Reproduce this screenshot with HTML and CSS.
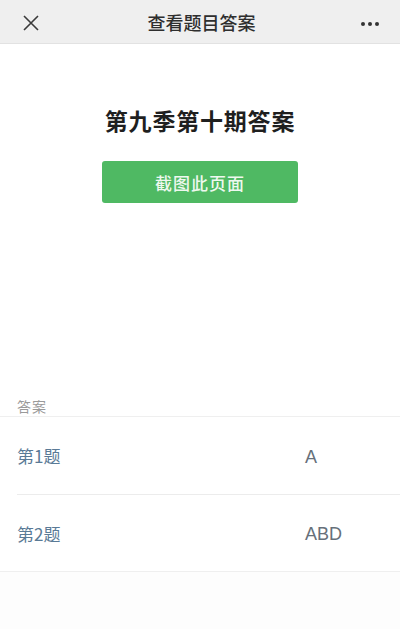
FILE: index.html
```html
<!DOCTYPE html>
<html lang="zh">
<head>
<meta charset="utf-8">
<title>查看题目答案</title>
<link rel="stylesheet" href="styles.css">
</head>
<body>
<div class="page">
  <header class="navbar">
    <span class="nav-btn close">
      <svg width="16" height="16" viewBox="0 0 16 16"><path d="M1 1L15 15M15 1L1 15" stroke="#3a3a3a" stroke-width="1.6" fill="none"/></svg>
    </span>
    <h1 class="nav-title">查看题目答案</h1>
    <span class="nav-btn more">
      <svg width="20" height="6" viewBox="0 0 20 6"><circle cx="3" cy="3" r="2" fill="#333"/><circle cx="10" cy="3" r="2" fill="#333"/><circle cx="17" cy="3" r="2" fill="#333"/></svg>
    </span>
  </header>

  <main class="content">
    <section class="hero">
      <h2 class="hero-title">第九季第十期答案</h2>
      <button class="btn-primary">截图此页面</button>
    </section>

    <section class="answers">
      <div class="answers-label">答案</div>
      <ul class="answer-list">
        <li class="answer-row"><span class="q">第1题</span><span class="a">A</span></li>
        <li class="answer-row"><span class="q">第2题</span><span class="a">ABD</span></li>
      </ul>
    </section>
  </main>
</div>
</body>
</html>
```

FILE: styles.css
```css
* { box-sizing: border-box; margin: 0; padding: 0; }

html, body {
  height: 100%;
}

body {
  font-family: "Noto Sans CJK SC", "Noto Sans", sans-serif;
  background: #fdfdfd;
  color: #333;
}

.page {
  min-height: 100%;
  display: flex;
  flex-direction: column;
}

.navbar {
  height: 44px;
  background: #efefef;
  border-bottom: 1px solid #e2e2e2;
  display: flex;
  align-items: center;
  justify-content: space-between;
  padding: 0 20px 0 23px;
}

.nav-btn {
  width: 20px;
  display: flex;
  align-items: center;
}

.nav-btn.close { margin-top: 2px; }
.nav-btn.more { justify-content: flex-end; margin-top: 4px; }

.nav-title {
  font-size: 18px;
  font-weight: 500;
  color: #2e2e2e;
  line-height: 24px;
}

.content {
  background: #fff;
}

.hero {
  display: flex;
  flex-direction: column;
  align-items: center;
  padding-top: 60px;
  height: 352px;
}

.hero-title {
  font-size: 23px;
  font-weight: 700;
  color: #1f1f1f;
  line-height: 32px;
  letter-spacing: 0.8px;
}

.btn-primary {
  margin-top: 25px;
  width: 196px;
  height: 42px;
  border: none;
  border-radius: 3px;
  background: #4fb963;
  color: #eef8ef;
  font-family: inherit;
  font-size: 17px;
  font-weight: 500;
  letter-spacing: 1px;
}

.answers-label {
  font-size: 14px;
  color: #9a9a9a;
  padding: 0 17px;
  line-height: 20px;
  height: 21px;
  border-bottom: 1px solid #efefef;
  letter-spacing: 1px;
}

.answer-list {
  list-style: none;
  border-bottom: 1px solid #efefef;
}

.answer-row {
  display: flex;
  align-items: center;
  height: 77px;
  margin-left: 17px;
  font-size: 17px;
}

.answer-row + .answer-row {
  border-top: 1px solid #ececec;
}

.answer-row .q {
  width: 288px;
  color: #5a7a96;
}

.answer-row .a {
  color: #66707a;
  font-family: "Liberation Sans", "Noto Sans", sans-serif;
  font-size: 18px;
  line-height: 26px;
  padding-top: 2px;
}
```
